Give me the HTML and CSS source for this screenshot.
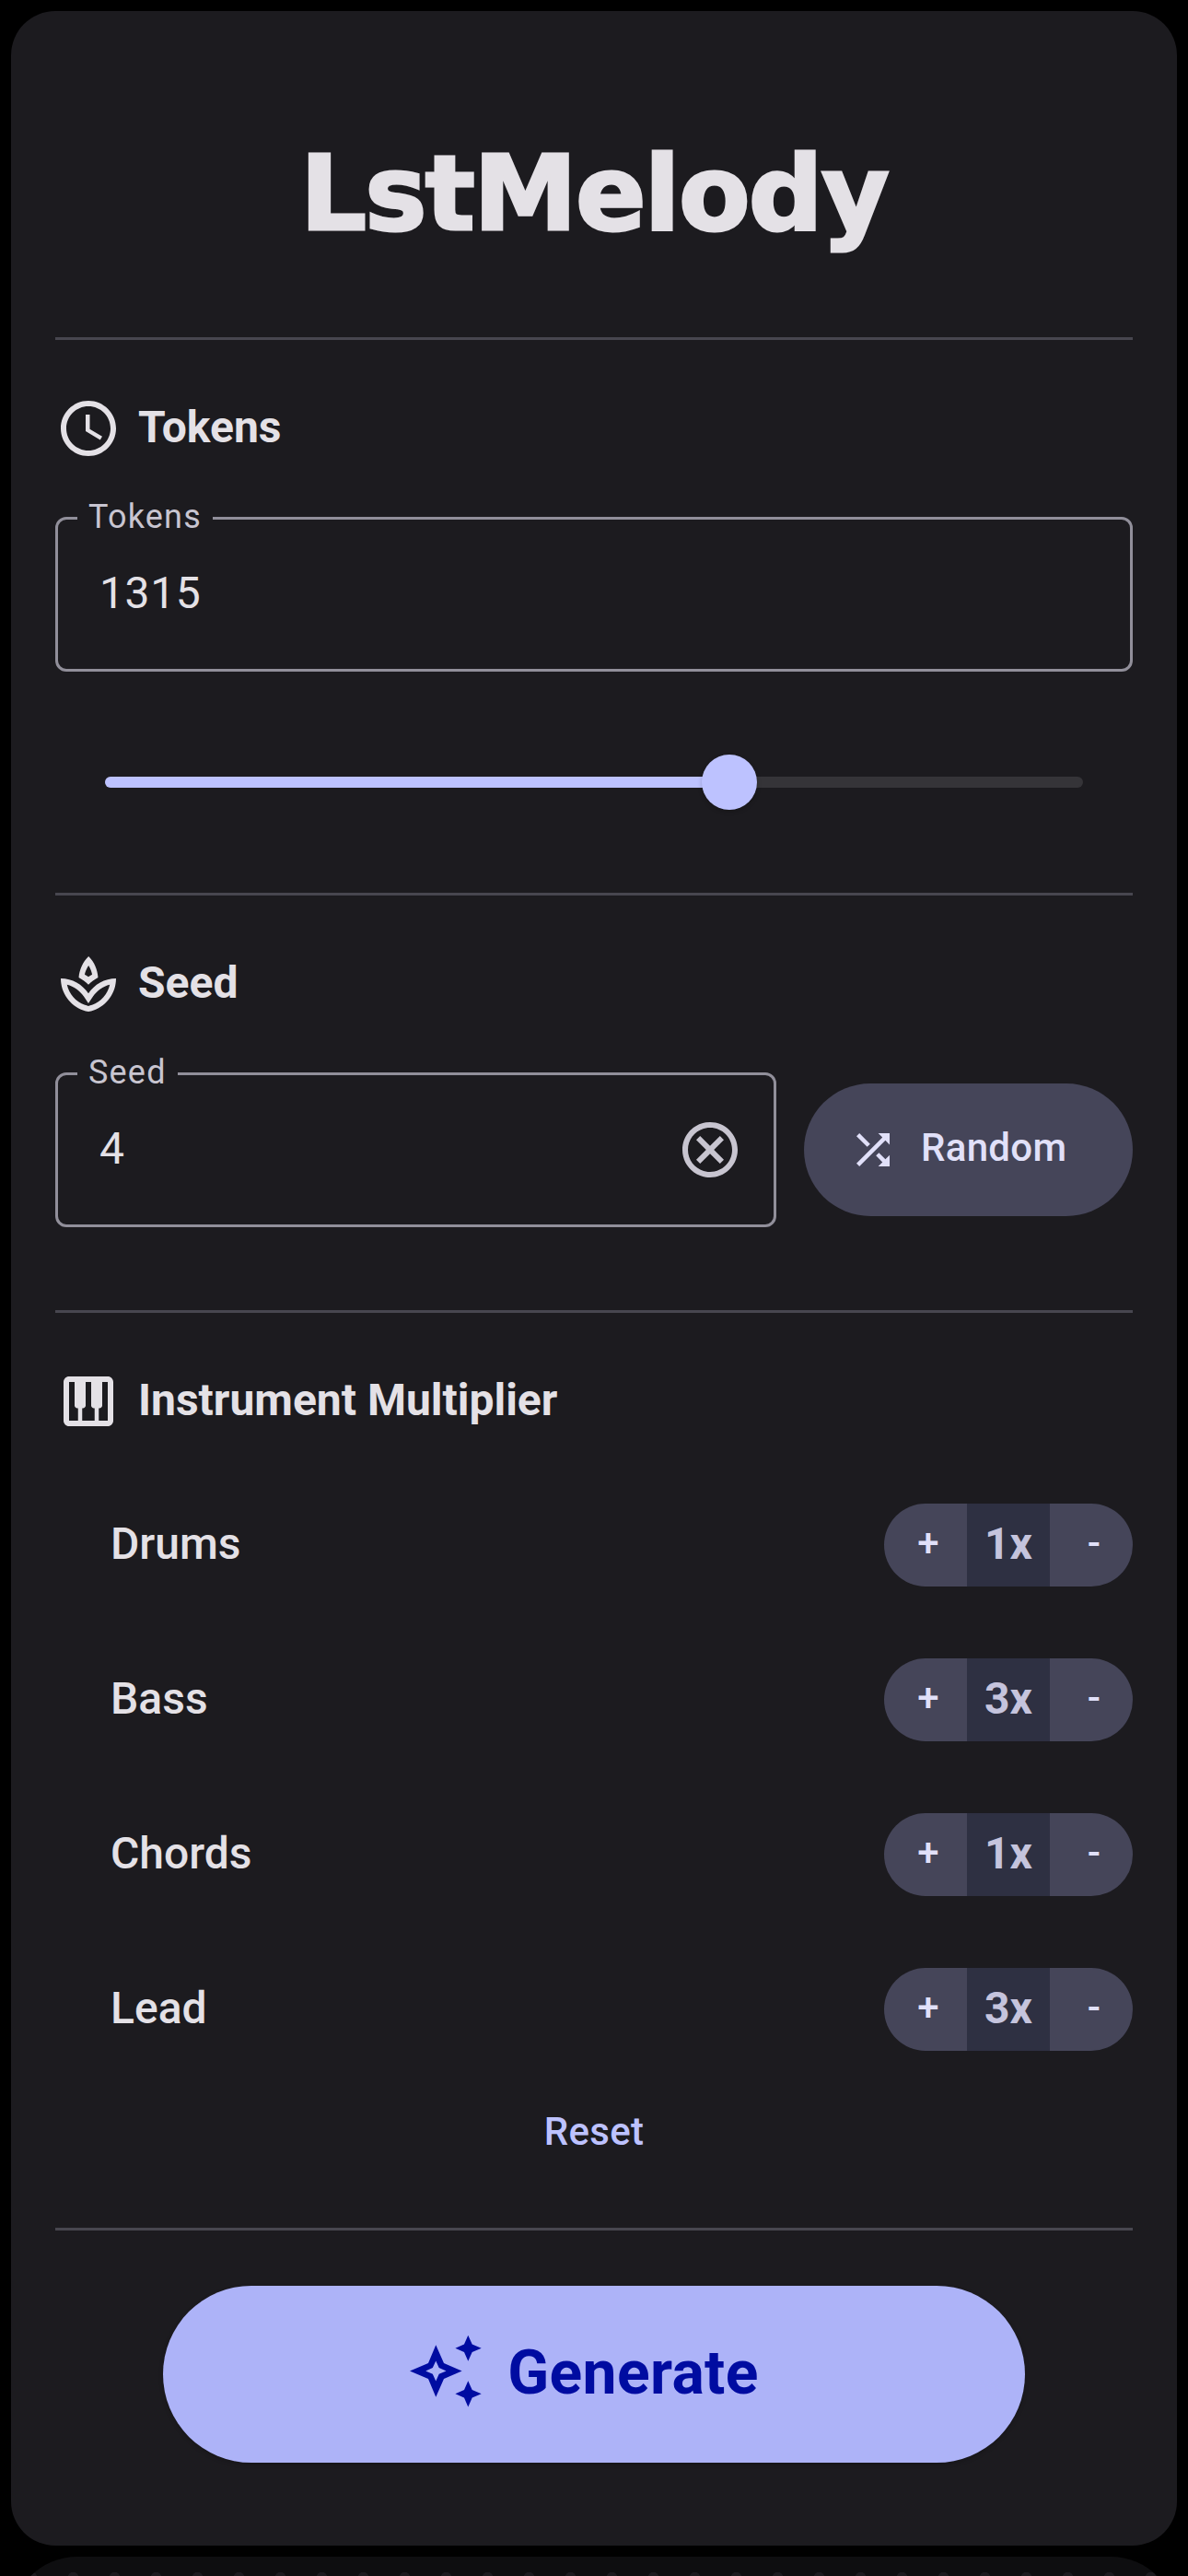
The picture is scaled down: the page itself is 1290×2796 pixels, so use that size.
FILE: index.html
```html
<!DOCTYPE html>
<html lang="en">
<head>
<meta charset="utf-8">
<title>LstMelody</title>
<link rel="stylesheet" href="styles.css">
</head>
<body>
<main class="panel">
  <header class="header"><h1 class="title">LstMelody</h1></header>

  <section class="section section-tokens">
    <h2 class="heading">
      <svg class="icon" viewBox="0 0 24 24"><path d="M11.99 2C6.47 2 2 6.48 2 12s4.47 10 9.99 10C17.52 22 22 17.52 22 12S17.52 2 11.99 2zM12 20c-4.42 0-8-3.58-8-8s3.58-8 8-8 8 3.58 8 8-3.58 8-8 8zM12.5 7H11v6l5.25 3.15.75-1.23-4.5-2.67z"/></svg>
      <span>Tokens</span>
    </h2>
    <div class="field"><span class="label">Tokens</span><span class="value">1315</span></div>
    <div class="slider"><div class="fill"></div><div class="thumb"></div></div>
  </section>

  <section class="section section-seed">
    <h2 class="heading">
      <svg class="icon" viewBox="0 0 24 24"><path fill-rule="evenodd" d="M15.49 9.63c-.18-2.79-1.31-5.51-3.43-7.63-2.14 2.14-3.32 4.86-3.55 7.63 1.28.68 2.46 1.56 3.49 2.63 1.03-1.06 2.21-1.94 3.49-2.63zM12.05 5.3c.7 1.1 1.13 2.2 1.3 3.3-.5.3-.9.5-1.35.85-.45-.35-.85-.55-1.35-.85.2-1.1.7-2.25 1.4-3.3zM12 15.45C9.85 12.17 6.18 10 2 10c0 5.32 3.36 9.82 8.03 11.49.63.23 1.29.4 1.97.51.68-.12 1.33-.29 1.97-.51C18.64 19.82 22 15.32 22 10c-4.18 0-7.85 2.17-10 5.45zM13.32 19.6c-.44.15-.88.27-1.33.37-.44-.09-.87-.21-1.28-.36-3.29-1.18-5.7-3.99-6.45-7.35 2.5.64 4.6 2.2 6.07 4.28L12 19l1.67-2.46c1.47-2.08 3.57-3.64 6.07-4.28-.76 3.36-3.15 6.17-6.42 7.34z"/></svg>
      <span>Seed</span>
    </h2>
    <div class="seed-row">
      <div class="field">
        <span class="label">Seed</span><span class="value">4</span>
        <svg class="icon clear" viewBox="0 0 24 24"><path d="M15.59 7L12 10.59 8.41 7 7 8.41 10.59 12 7 15.59 8.41 17 12 13.41 15.59 17 17 15.59 13.41 12 17 8.41zM12 2C6.47 2 2 6.47 2 12s4.47 10 10 10 10-4.47 10-10S17.53 2 12 2zm0 18c-4.41 0-8-3.59-8-8s3.59-8 8-8 8 3.59 8 8-3.59 8-8 8z"/></svg>
      </div>
      <button class="random">
        <svg viewBox="0 0 24 24"><path d="M10.59 9.17L5.41 4 4 5.41l5.17 5.17 1.42-1.41zM14.5 4l2.04 2.04L4 18.59 5.41 20 17.96 7.46 20 9.5V4h-5.5zm.33 9.41l-1.41 1.41 3.13 3.13L14.5 20H20v-5.5l-2.04 2.04-3.13-3.13z"/></svg>
        <span>Random</span>
      </button>
    </div>
  </section>

  <section class="section section-instruments">
    <h2 class="heading">
      <svg class="icon" viewBox="0 0 24 24"><path d="M19 3H5c-1.1 0-2 .9-2 2v14c0 1.1.9 2 2 2h14c1.1 0 2-.9 2-2V5c0-1.1-.9-2-2-2zm-5 11.5h.25V19h-4.5v-4.5H10c.55 0 1-.45 1-1V5h2v8.5c0 .55.45 1 1 1zM5 5h2v8.5c0 .55.45 1 1 1h.25V19H5V5zm14 14h-3.25v-4.5H16c.55 0 1-.45 1-1V5h2v14z"/></svg>
      <span>Instrument Multiplier</span>
    </h2>
    <div class="rows">
      <div class="row"><span>Drums</span><div class="stepper"><button>+</button><b>1x</b><button>-</button></div></div>
      <div class="row"><span>Bass</span><div class="stepper"><button>+</button><b>3x</b><button>-</button></div></div>
      <div class="row"><span>Chords</span><div class="stepper"><button>+</button><b>1x</b><button>-</button></div></div>
      <div class="row"><span>Lead</span><div class="stepper"><button>+</button><b>3x</b><button>-</button></div></div>
    </div>
    <button class="reset">Reset</button>
  </section>

  <section class="section section-generate">
    <button class="generate">
      <svg viewBox="0 0 80 80"><path fill-rule="evenodd" d="M29.3 11.3L38 31l19.6 8.4L38 48l-8.7 19.7L21 48 1 39.4 21 31zM29.3 28.5L25.8 36l-7.6 3.4 7.6 3.3 3.5 7.8 3.4-7.8 7.8-3.3-7.8-3.4zM64.3.7l4.4 9.8 10 4.2-10 4.3-4.4 9.8-4.3-9.8-9.6-4.3 9.6-4.2zM64.3 50.3l4.4 9.8 10 4.2-10 4.3-4.4 9.8-4.3-9.8-9.6-4.3 9.6-4.2z"/></svg>
      <span>Generate</span>
    </button>
  </section>
</main>
<div class="canvas"></div>
</body>
</html>
```
FILE: styles.css
```css
* { box-sizing: border-box; }
body {
  margin: 0;
  height: 2796px;
  padding: 12px 12px 0;
  overflow: hidden;
  background: #000;
  color: #e4e1e6;
  font-family: Roboto, sans-serif;
}
h1, h2 { margin: 0; }
svg { display: block; flex: none; fill: currentColor; }
button {
  border: 0;
  padding: 0;
  background: none;
  color: inherit;
  font: 500 42px/60px Roboto, sans-serif;
}
.panel {
  height: 2751px;
  padding: 0 48px;
  border-radius: 48px;
  background: #1c1b1f;
}
.header {
  height: 354px;
  padding-top: 124px;
}
.title {
  font: bold 113px/148px "DejaVu Sans", sans-serif;
  letter-spacing: -1.7px;
  text-align: center;
  -webkit-text-stroke: 3px currentColor;
}
.section {
  border-top: 3px solid #47464f;
  padding-top: 60px;
}
.section-tokens { height: 603px; }
.section-seed { height: 453px; }
.section-instruments { height: 996px; }
.heading {
  display: flex;
  align-items: center;
  gap: 18px;
  height: 72px;
  margin-bottom: 60px;
  font-size: 48px;
  line-height: 68px;
  font-weight: 700;
}
.heading span { margin-top: -2px; }
.icon { width: 72px; height: 72px; }
.field {
  position: relative;
  display: flex;
  align-items: center;
  justify-content: space-between;
  height: 168px;
  padding: 0 33px 0 45px;
  border: 3px solid #918f9a;
  border-radius: 12px;
}
.label {
  position: absolute;
  left: 21px;
  top: -27px;
  padding: 0 12px;
  background: #1c1b1f;
  color: #c8c5d0;
  font-size: 36px;
  line-height: 48px;
  letter-spacing: 1.2px;
}
.value {
  font-size: 48px;
  line-height: 72px;
  letter-spacing: .6px;
  margin-top: -2px;
}
.clear { color: #c8c5d0; }
.slider {
  display: flex;
  align-items: center;
  width: 1062px;
  height: 12px;
  margin: 114px auto 0;
  border-radius: 6px;
  background: #353438;
}
.fill {
  width: 660px;
  height: 12px;
  border-radius: 6px;
  background: #bdc2ff;
}
.thumb {
  width: 60px;
  height: 60px;
  margin-left: -12px;
  border-radius: 50%;
  background: #bdc2ff;
  box-shadow: 0 2px 5px rgba(0, 0, 0, .2);
}
.seed-row {
  display: flex;
  align-items: center;
  gap: 30px;
}
.seed-row .field { flex: 1; }
.random {
  display: flex;
  align-items: center;
  gap: 25px;
  width: 357px;
  height: 144px;
  padding-left: 48px;
  border-radius: 72px;
  background: #454559;
  color: #e1e0f9;
  letter-spacing: .3px;
}
.random svg { width: 54px; height: 54px; }
.random span { margin-top: -4px; }
.rows {
  display: grid;
  gap: 78px;
  margin-top: 75px;
}
.section-instruments .heading { margin-bottom: 0; }
.row {
  display: flex;
  align-items: center;
  justify-content: space-between;
  height: 90px;
  padding-left: 60px;
  font-size: 48px;
  line-height: 72px;
  font-weight: 500;
}
.row > span { margin-top: -2px; }
.stepper {
  display: flex;
  width: 270px;
  height: 90px;
  overflow: hidden;
  border-radius: 45px;
  background: #454559;
  color: #e1e0f9;
}
.stepper button {
  width: 90px;
  padding: 0 0 4px 6px;
}
.stepper b {
  width: 90px;
  background: #2e3042;
  color: #c5c4dd;
  line-height: 88px;
  text-align: center;
}
.reset {
  display: block;
  margin: 58px auto 0;
  color: #bdc2ff;
  letter-spacing: .3px;
}
.generate {
  display: flex;
  align-items: center;
  justify-content: center;
  gap: 27px;
  width: 936px;
  height: 192px;
  margin: 0 auto;
  padding-right: 22px;
  border-radius: 96px;
  background: #adb3f8;
  color: #000ca1;
  font-size: 66px;
  font-weight: 700;
  letter-spacing: .35px;
  box-shadow: 0 2px 5px rgba(0, 0, 0, .2);
}
.generate svg { width: 80px; height: 80px; margin-top: -7px; }
.generate span { margin-top: -3px; }
.canvas {
  height: 90px;
  margin-top: 12px;
  border-radius: 72px 72px 0 0;
  background: radial-gradient(circle, #1c1b1f 5.5px, transparent 6px) 0 0 / 45px 45px #0e0e10;
}
```
